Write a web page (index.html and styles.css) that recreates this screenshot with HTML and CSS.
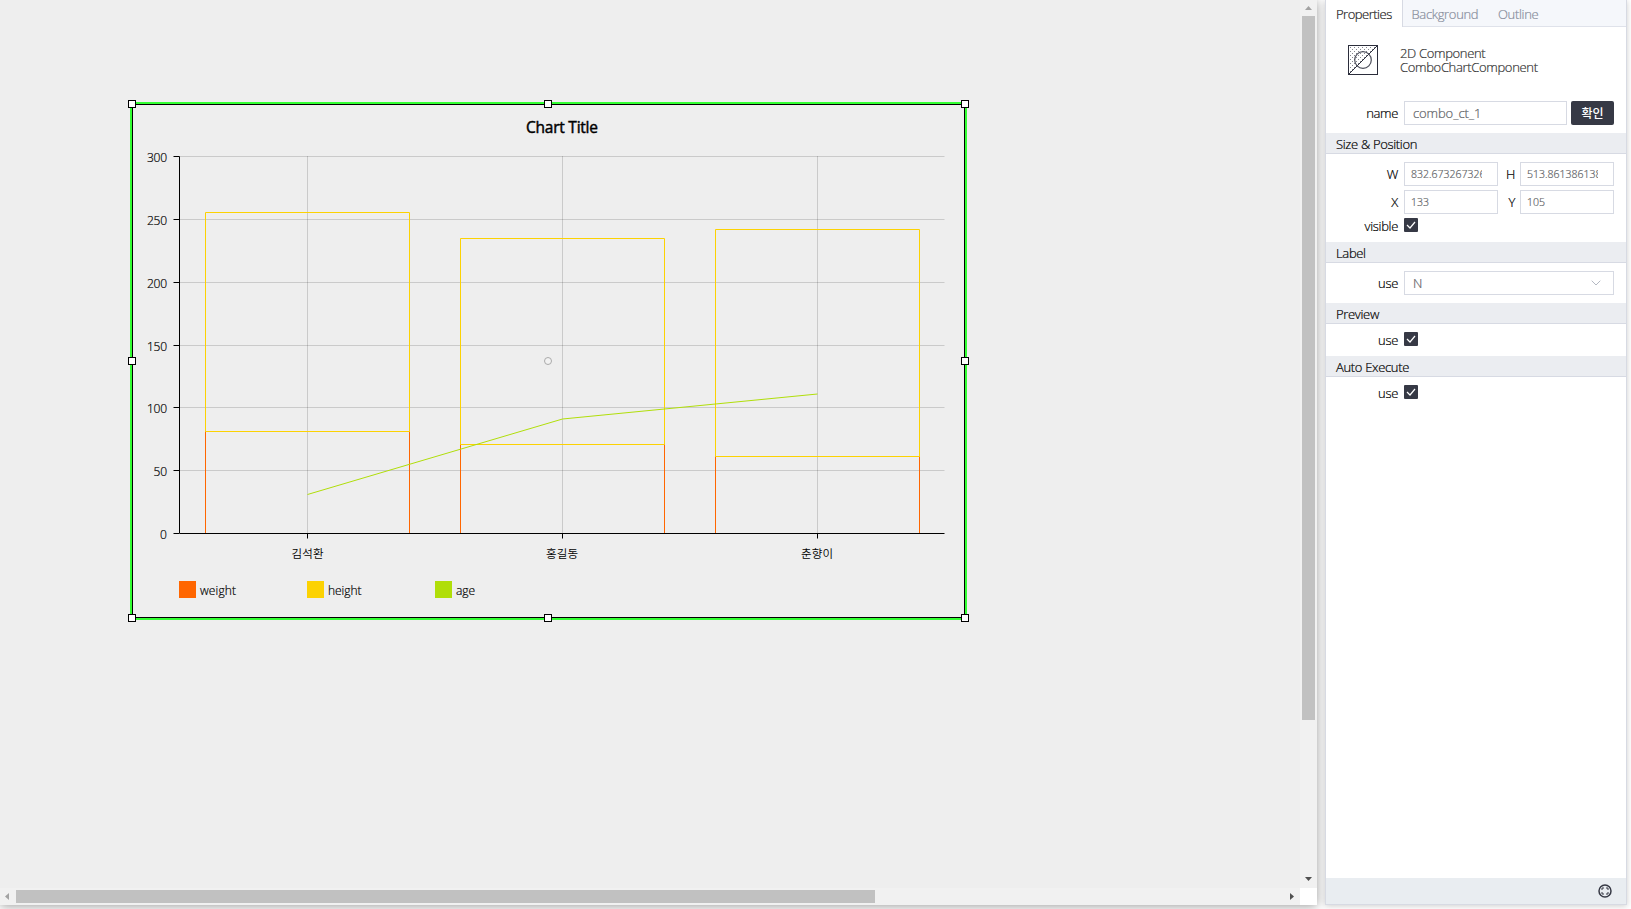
FILE: index.html
```html
<!DOCTYPE html>
<html lang="ko">
<head>
<meta charset="utf-8">
<title>Editor</title>
<link rel="stylesheet" href="styles.css">
</head>
<body>
<main class="stage">
  <div class="canvas">
    <svg class="chart" width="1300" height="888" viewBox="0 0 1300 888">
      <g class="grid">
        <path d="M180 156.5H944.5M180 219.5H944.5M180 282.5H944.5M180 345.5H944.5M180 407.5H944.5M180 470.5H944.5"/>
        <path d="M307.5 156V533M562.5 156V533M817.5 156V533"/>
      </g>
      <path class="weight" d="M205.5 533V431.5H409.5V533M460.5 533V444.5H664.5V533M715.5 533V456.5H919.5V533"/>
      <path class="height" d="M205.5 212.5H409.5V431.5H205.5ZM460.5 238.5H664.5V444.5H460.5ZM715.5 229.5H919.5V456.5H715.5Z"/>
      <path class="age" d="M307.5 494.5L562.5 419L817.5 394"/>
      <path class="axis" d="M173.5 156.5H179.5V533.5H944.5M173.5 219.5H179M173.5 282.5H179M173.5 345.5H179M173.5 407.5H179M173.5 470.5H179M173.5 533.5H179M307.5 533V538.5M562.5 533V538.5M817.5 533V538.5"/>
      <text class="title" x="526" y="133" textLength="72">Chart Title</text>
      <g class="tick">
        <text x="147" y="162" textLength="20">300</text>
        <text x="147" y="225" textLength="20">250</text>
        <text x="147" y="288" textLength="20">200</text>
        <text x="147" y="351" textLength="20">150</text>
        <text x="147" y="413" textLength="20">100</text>
        <text x="153.5" y="476" textLength="13.500">50</text>
        <text x="160" y="539">0</text>
      </g>
      <g class="category">
        <text x="291.5" y="558" textLength="32">김석환</text>
        <text x="546" y="558" textLength="32">홍길동</text>
        <text x="801" y="558" textLength="32">춘향이</text>
      </g>
      <g class="legend">
        <rect x="179" y="581" width="17" height="17" fill="#ff6600"/>
        <text x="200" y="595" textLength="36">weight</text>
        <rect x="307" y="581" width="17" height="17" fill="#fcd202"/>
        <text x="328" y="595" textLength="33.5">height</text>
        <rect x="435" y="581" width="17" height="17" fill="#b0de09"/>
        <text x="456" y="595" textLength="19">age</text>
      </g>
      <rect class="outer" x="131" y="103" width="835" height="516"/>
      <rect class="inner" x="132.5" y="104.5" width="832" height="513"/>
      <g class="handle">
        <rect x="128.5" y="100.5" width="7" height="7"/><rect x="544.5" y="100.5" width="7" height="7"/><rect x="961.5" y="100.5" width="7" height="7"/>
        <rect x="128.5" y="357.5" width="7" height="7"/><rect x="961.5" y="357.5" width="7" height="7"/>
        <rect x="128.5" y="614.5" width="7" height="7"/><rect x="544.5" y="614.5" width="7" height="7"/><rect x="961.5" y="614.5" width="7" height="7"/>
      </g>
      <circle class="pivot" cx="548" cy="361" r="3.5"/>
    </svg>
  </div>
  <div class="vbar">
    <svg class="arrow" width="17" height="16"><path fill="#a3a3a3" d="M5 10h7l-3.500-4z"/></svg>
    <div class="vthumb"></div>
    <svg class="arrow" width="17" height="17"><path fill="#505050" d="M5 6h7l-3.500 4z"/></svg>
  </div>
  <div class="hbar">
    <svg class="arrow" width="16" height="17"><path fill="#a3a3a3" d="M9 5v7l-4-3.500z"/></svg>
    <div class="hthumb"></div>
    <svg class="arrow" width="16" height="17"><path fill="#505050" d="M6 5v7l4-3.500z"/></svg>
  </div>
  <div class="corner"></div>
</main>
<aside class="panel">
  <nav class="tabs">
    <span class="tab active">Properties</span>
    <span class="tab">Background</span>
    <span class="tab">Outline</span>
  </nav>
  <div class="summary">
    <svg width="30" height="30" viewBox="0 0 30 30" fill="none" stroke="#2b2d3b">
      <defs><pattern id="dots" width="4" height="4" patternUnits="userSpaceOnUse"><g stroke="none" fill="#85868e"><rect width="1" height="1"/><rect x="2" y="2" width="1" height="1"/></g></pattern></defs>
      <path d="M1 1H29L1 29Z" fill="url(#dots)" stroke="none"/>
      <rect x=".5" y=".5" width="29" height="29"/>
      <path d="M1 29L29 1"/>
      <circle cx="15" cy="15" r="8.300" stroke="#4d4f5b" stroke-width="1.200"/>
    </svg>
    <div class="kind"><div>2D Component</div><div>ComboChartComponent</div></div>
  </div>
  <div class="row name-row"><label>name</label><div class="field wide"><span>combo_ct_1</span></div><button class="ok">확인</button></div>
  <h3>Size &amp; Position</h3>
  <div class="row size-row"><label>W</label><div class="field num"><span>832.6732673267</span></div><label class="second">H</label><div class="field num"><span>513.8613861386</span></div></div>
  <div class="row pos-row"><label>X</label><div class="field num"><span>133</span></div><label class="second">Y</label><div class="field num"><span>105</span></div></div>
  <div class="row check-row visible-row"><label>visible</label><svg class="check" width="14" height="14"><path d="M3 7l3 3 5-6"/></svg></div>
  <h3>Label</h3>
  <div class="row select-row"><label>use</label><div class="field select"><span>N</span><svg width="10" height="6"><path d="M.7.7L5 5 9.300.7" fill="none" stroke="#b4b9c3"/></svg></div></div>
  <h3>Preview</h3>
  <div class="row check-row"><label>use</label><svg class="check" width="14" height="14"><path d="M3 7l3 3 5-6"/></svg></div>
  <h3>Auto Execute</h3>
  <div class="row check-row"><label>use</label><svg class="check" width="14" height="14"><path d="M3 7l3 3 5-6"/></svg></div>
  <footer>
    <svg width="14" height="14" viewBox="0 0 14 14" fill="none" stroke="#363945">
      <circle cx="7" cy="7" r="6" stroke-width="1.500"/>
      <path d="M4 6V4H6M8 4H10V6M10 8V10H8M6 10H4V8"/>
    </svg>
  </footer>
</aside>
</body>
</html>
```

FILE: styles.css
```css
* { box-sizing: border-box; }
body {
  margin: 0;
  width: 1631px;
  height: 909px;
  overflow: hidden;
  display: flex;
  gap: 8px;
  background: #fff;
  color: #000;
  font: 350 13px/16px "Open Sans", "Noto Sans CJK KR", sans-serif;
}
.stage {
  width: 1317px;
  height: 905px;
  display: grid;
  grid-template: 888px 17px / 1300px 17px;
  box-shadow: 0 1px 10px rgba(0, 0, 0, .4);
}
.canvas { background: #eee; }
.chart { display: block; }
.vbar, .hbar { display: flex; background: #f1f1f1; }
.vbar { flex-direction: column; }
.arrow { flex: none; }
.vthumb { width: 13px; height: 704px; margin: 0 2px auto; background: #c1c1c1; }
.hthumb { width: 859px; height: 13px; margin: 2px auto 2px 0; background: #c1c1c1; }
.corner { background: #fff; }
.grid { stroke: #000; stroke-opacity: .15; fill: none; }
.weight, .height, .age, .axis { fill: none; }
.weight { stroke: #ff6600; }
.height { stroke: #fcd202; }
.age { stroke: #b0de09; }
.axis { stroke: #000; }
.title { font-size: 15.5px; font-weight: 500; stroke: #000; stroke-width: .45px; }
.tick, .legend { font-size: 12px; }
.tick text, .legend text { stroke: #000; stroke-width: .2px; }
.category { font-size: 11.5px; }
.outer { fill: none; stroke: #33ff33; stroke-width: 2; }
.inner { fill: none; stroke: #000; }
.handle { fill: #fff; stroke: #000; }
.pivot { fill: #f2f2f2; stroke: #aaa; }

.panel {
  width: 302px;
  height: 905px;
  display: flex;
  flex-direction: column;
  background: #fff;
  border: 1px solid #d7dae3;
  border-top: 0;
  box-shadow: 0 1px 6px rgba(0, 0, 0, .2);
  letter-spacing: -.33px;
  -webkit-text-stroke: .2px currentColor;
}
.tabs { display: flex; height: 27px; background: #f5f7fb; border-bottom: 1px solid #dfe2ea; flex: none; }
.tab { height: 26px; padding: 6px 0 0 9px; color: #878d9b; white-space: nowrap; }
.tab + .tab { padding-left: 8.5px; width: 86.5px; }
.tab.active { width: 77px; height: 27px; padding-left: 10px; background: #fff; color: #222; border-right: 1px solid #d7dae3; }
.tab.active { letter-spacing: -.5px; }
.summary { display: flex; gap: 22px; height: 74px; padding: 18px 0 0 22px; flex: none; }
.kind { color: #333; line-height: 14px; padding-top: 1px; white-space: nowrap; }
.row { display: flex; flex: none; }
label { width: 72px; margin-right: 6px; text-align: right; line-height: 24px; }
.second { width: 17px; margin-right: 5px; }
.field {
  height: 24px;
  border: 1px solid #d7dae3;
  background: #fff;
  color: #606266;
  line-height: 23px;
  overflow: hidden;
  letter-spacing: 0;
}
.field span { display: block; overflow: hidden; white-space: nowrap; }
.wide { width: 163px; padding-left: 8px; letter-spacing: -.1px; }
.num { width: 94px; padding: 0 15px 0 6px; font-size: 10.5px; }
.ok {
  width: 43px;
  height: 24px;
  margin-left: 4px;
  padding: 0;
  border: 0;
  border-radius: 2px;
  background: #363945;
  color: #fff;
  font: 500 12px/24px "Noto Sans CJK KR", sans-serif;
  -webkit-text-stroke: 0;
}
h3 {
  height: 21px;
  margin: 0;
  padding-left: 10px;
  flex: none;
  background: #ebedf1;
  border-bottom: 1px solid #d7dae3;
  font-size: 13px;
  font-weight: 350;
  line-height: 22px;
}
.name-row { height: 32px; }
.size-row { height: 36px; padding-top: 8px; }
.pos-row { height: 24px; }
.check-row { height: 32px; padding-top: 8px; }
.check-row label { line-height: 17px; }
.visible-row { height: 28px; padding-top: 4px; }
.select-row { height: 40px; padding-top: 8px; }
.select { width: 210px; padding: 0 12px 0 8px; display: flex; align-items: center; justify-content: space-between; }
.check { background: #363945; border-radius: 1px; }
.check path { fill: none; stroke: #fff; stroke-width: 1.2; }
footer {
  height: 26px;
  margin-top: auto;
  padding-right: 14px;
  display: flex;
  align-items: center;
  justify-content: flex-end;
  background: #e9edf1;
}
```
